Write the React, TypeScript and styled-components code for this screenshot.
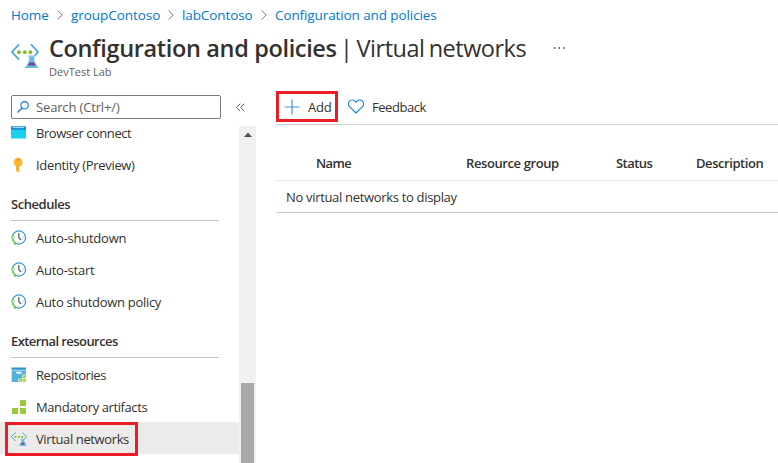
import React from "react";
import styled, { createGlobalStyle } from "styled-components";

const GlobalStyle = createGlobalStyle`
  * { box-sizing: border-box; }
  body {
    margin: 0;
    background: #fff;
    color: #323130;
    font-family: "Open Sans", "Noto Sans", sans-serif;
    font-size: 13px;
    overflow: hidden;
  }
`;

const Page = styled.div`
  width: 778px;
  height: 463px;
  overflow: hidden;
  display: flex;
  flex-direction: column;
`;

const Label = styled.span<{ $ls?: number }>`
  letter-spacing: ${(p) => p.$ls ?? -0.25}px;
  white-space: nowrap;
`;

const Breadcrumb = styled.nav`
  display: flex;
  align-items: center;
  height: 30px;
  flex: none;
  padding-left: 11px;
  color: #0078d4;
  font-size: 13.5px;
  line-height: 18px;
`;

const Crumb = styled(Label)<{ $w: number }>`
  width: ${(p) => p.$w}px;
`;

const Separator = styled.svg`
  width: 6px;
  height: 10px;
  margin: 0 8px;
  flex: none;
`;

const Header = styled.header`
  display: flex;
  height: 65px;
  flex: none;
  padding-left: 11px;
`;

const HeaderIcon = styled.div`
  width: 38px;
  padding-top: 12px;
`;

const Title = styled.h1`
  margin: 0;
  font-size: 23.5px;
  line-height: 36px;
  font-weight: 600;
  display: flex;
  white-space: pre;
`;

const TitleMain = styled.span`
  width: 291px;
  letter-spacing: -0.35px;
`;

const TitleSub = styled.span`
  width: 213px;
  font-weight: 400;
  letter-spacing: -0.5px;
  word-spacing: -1.4px;
`;

const Subtitle = styled.div`
  font-size: 11px;
  line-height: 14px;
  letter-spacing: 0;
  color: #605e5c;
  margin-top: -1px;
`;

const Body = styled.div`
  display: flex;
  flex: 1;
  min-height: 0;
`;

const Sidebar = styled.aside`
  width: 256px;
  flex: none;
  display: flex;
  flex-direction: column;
`;

const SearchRow = styled.div`
  display: flex;
  align-items: center;
  height: 24px;
  flex: none;
  padding-left: 11px;
  position: relative;
  z-index: 1;
`;

const SearchBox = styled.div`
  width: 210px;
  height: 24px;
  border: 1px solid #7a7876;
  border-radius: 2px;
  background: #fff;
  display: flex;
  align-items: center;
  gap: 7px;
  padding-left: 5px;
  color: #605e5c;
`;

const Collapse = styled.svg`
  width: 9px;
  height: 9px;
  margin-left: 15px;
`;

const MenuArea = styled.div`
  display: flex;
  flex: 1;
  min-height: 0;
  margin-top: -3px;
`;

const Menu = styled.div`
  width: 239px;
  flex: none;
`;

const MenuItem = styled.div<{ $selected?: boolean }>`
  position: relative;
  height: 32px;
  padding-left: 11px;
  display: flex;
  align-items: center;
  gap: 9px;
  background: ${(p) => (p.$selected ? "#edebe9" : "transparent")};
  line-height: 18px;

  ${Label} { padding-top: 2px; }
`;

const ItemIcon = styled.span`
  width: 16px;
  height: 16px;
  margin-top: 2px;
  flex: none;
  display: block;
  svg { display: block; }
`;

const GroupTitle = styled.div`
  height: 41px;
  width: 208px;
  margin-left: 11px;
  padding-top: 15px;
  border-bottom: 1px solid #c8c6c4;
  font-weight: 600;
  line-height: 18px;
`;

const Highlight = styled.div`
  position: absolute;
  left: 5px;
  top: 0;
  width: 133px;
  height: 34px;
  border: 3px solid #ed1c24;
`;

const ScrollTrack = styled.div`
  width: 17px;
  margin-top: 10px;
  background: #f1f1f1;
  display: flex;
  flex-direction: column;
  align-items: center;
`;

const ScrollArrow = styled.svg`
  width: 8px;
  height: 5px;
  margin-top: 6px;
  flex: none;
`;

const ScrollThumb = styled.div`
  width: 13px;
  flex: 1;
  margin-top: 246px;
  background: #a8a8a8;
`;

const Main = styled.main`
  flex: 1;
  margin-left: 20px;
  margin-top: -4px;
`;

const Toolbar = styled.div`
  height: 34px;
  display: flex;
  align-items: flex-start;
  border-bottom: 1px solid #d2d0ce;
`;

const AddButton = styled.div`
  width: 62px;
  height: 31px;
  border: 3px solid #ed1c24;
  display: flex;
  align-items: center;
  padding-left: 5px;
  gap: 8px;
`;

const FeedbackButton = styled.div`
  height: 31px;
  display: flex;
  align-items: center;
  padding-left: 10px;
  gap: 8px;
`;

const TableHead = styled.div`
  display: grid;
  grid-template-columns: 150px 150px 80px 1fr;
  padding: 21px 0 0 40px;
  height: 56px;
  border-bottom: 1px solid #e8e6e4;
  line-height: 34px;
  font-weight: 600;
`;

const TableRow = styled.div`
  height: 32px;
  padding-left: 10px;
  display: flex;
  align-items: center;
  border-bottom: 1px solid #c8c6c4;
`;

const More = styled.svg`
  width: 13px;
  height: 3px;
  margin-top: 17px;
`;

const Chevron = () => (
  <Separator viewBox="0 0 6 10">
    <path d="M.7.5 5.2 5 .7 9.5" fill="none" stroke="#767472" />
  </Separator>
);

const LabIcon = ({ size }: { size: number }) => (
  <svg width={size} height={size} viewBox="0 0 28 28">
    <path d="M8 2.4.9 10l7.1 7.6M20 2.4l7.1 7.6-4.6 5" fill="none" stroke="#45a6d3" strokeWidth="1.7" />
    <circle cx="8" cy="10.2" r="1.9" fill="#86b82a" />
    <circle cx="13.8" cy="10.2" r="1.9" fill="#86b82a" />
    <circle cx="19.4" cy="10.2" r="1.9" fill="#86b82a" />
    <path d="M18.2 14h5v4.5l3.8 7.5H14.4l3.8-7.5z" fill="#6cbbe0" />
    <path d="M17.2 13.4h7V15h-7z" fill="#8dcce8" />
    <path d="m18.6 20.6-1.6 3h7.6l-1.6-3z" fill="#7b3f91" />
    <path d="M14.2 24.4h13V26h-13z" fill="#6cbbe0" />
  </svg>
);

const BrowserIcon = () => (
  <svg width="16" height="16" viewBox="0 0 16 16">
    <path d="M0 1.5h15V13a.6.6 0 0 1-.6.6H.6A.6.6 0 0 1 0 13z" fill="#1bd0ee" />
    <path d="M0 4.5V1.5h15v3z" fill="#0877cf" />
    <path d="M1.5 2.2h12v1h-12z" fill="#c9e7fa" />
  </svg>
);

const KeyIcon = () => (
  <svg width="16" height="16" viewBox="0 0 16 16">
    <path d="M7.2.7a4.6 4.6 0 0 0-2 8.7v4.4L7 15.5l1.8-1.8-1-1.2 1-1.1-.9-1 1-1A4.6 4.6 0 0 0 7.2.7z" fill="#fdba31" />
    <circle cx="7.1" cy="3" r="1.2" fill="#e58b10" />
    <path d="M6.3 8v5.5" stroke="#e99c1c" strokeWidth=".8" />
  </svg>
);

const ClockIcon = () => (
  <svg width="16" height="16" viewBox="0 0 16 16">
    <circle cx="7.9" cy="7.5" r="6.6" fill="#fff" stroke="#3a96da" strokeWidth="1.2" />
    <path d="M3.2 2.8A6.7 6.7 0 0 0 4 13" fill="none" stroke="#7cc96a" strokeWidth="1.5" />
    <path d="m2 13.3 4-.5-1.4 2.5z" fill="#7cc742" />
    <path d="M7.8 3v4.7l2.4 2.3" fill="none" stroke="#65686d" strokeWidth="1.3" />
    <path d="M3 7.5h1m7.5 0h1M7.8 11.5v1" stroke="#a0a6ab" />
  </svg>
);

const RepoIcon = () => (
  <svg width="16" height="16" viewBox="0 0 16 16">
    <path d="M.7 1h14.3v14H.7z" fill="#4fb2da" />
    <path d="M.5.5H15v2H.5z" fill="#2a93bf" />
    <path d="M.8 2.7H15v1H.8z" fill="#a8d9eb" />
    <path d="M5.3 4.7h5.2v2H5.3z" fill="#fff" />
    <path d="M11.2 7.5H15.4V15.4H7.3v-3.8h3.9z" fill="#e4efce" />
    <path d="M12 8.3h2.7v2.7H12zM12 12h2.7v2.7H12zM8.2 12h2.7v2.7H8.2z" fill="#a3cd4c" />
  </svg>
);

const ArtifactIcon = () => (
  <svg width="16" height="16" viewBox="0 0 16 16">
    <path d="M9 1h6v6H9zM1 9h6v6H1zM9 9h6v6H9z" fill="#99ca3c" />
  </svg>
);

interface Entry {
  text: string;
  icon: React.ReactNode;
  ls?: number;
  selected?: boolean;
}

const general: Entry[] = [
  { text: "Browser connect", icon: <BrowserIcon />, ls: -0.45 },
  { text: "Identity (Preview)", icon: <KeyIcon />, ls: -0.33 },
];
const schedules: Entry[] = [
  { text: "Auto-shutdown", icon: <ClockIcon /> },
  { text: "Auto-start", icon: <ClockIcon /> },
  { text: "Auto shutdown policy", icon: <ClockIcon />, ls: -0.3 },
];
const external: Entry[] = [
  { text: "Repositories", icon: <RepoIcon />, ls: -0.43 },
  { text: "Mandatory artifacts", icon: <ArtifactIcon />, ls: -0.4 },
  { text: "Virtual networks", icon: <LabIcon size={16} />, ls: -0.38, selected: true },
];

const Items = ({ entries }: { entries: Entry[] }) => (
  <>
    {entries.map((e) => (
      <MenuItem key={e.text} $selected={e.selected}>
        <ItemIcon>{e.icon}</ItemIcon>
        <Label $ls={e.ls}>{e.text}</Label>
        {e.selected && <Highlight />}
      </MenuItem>
    ))}
  </>
);

export default function App() {
  return (
    <Page>
      <GlobalStyle />
      <Breadcrumb>
        <Crumb $w={38} $ls={-0.1}>Home</Crumb>
        <Chevron />
        <Crumb $w={89} $ls={-0.05}>groupContoso</Crumb>
        <Chevron />
        <Crumb $w={71} $ls={-0.1}>labContoso</Crumb>
        <Chevron />
        <Crumb $w={163} $ls={-0.1}>Configuration and policies</Crumb>
      </Breadcrumb>
      <Header>
        <HeaderIcon><LabIcon size={28} /></HeaderIcon>
        <div>
          <Title>
            <TitleMain>Configuration and policies</TitleMain>
            <TitleSub>| Virtual networks</TitleSub>
            <More viewBox="0 0 13 3">
              <path d="M1 1h1.5M5.5 1H7M10 1h1.5" stroke="#484644" strokeWidth="1.4" />
            </More>
          </Title>
          <Subtitle>DevTest Lab</Subtitle>
        </div>
      </Header>
      <Body>
        <Sidebar>
          <SearchRow>
            <SearchBox>
              <svg width="12" height="12" viewBox="0 0 12 12">
                <path d="M.5 11.5 5 7" stroke="#0078d4" strokeWidth="1.1" />
                <circle cx="7.6" cy="4.3" r="3.7" fill="none" stroke="#0078d4" strokeWidth="1.1" />
              </svg>
              <Label $ls={-0.15}>Search (Ctrl+/)</Label>
            </SearchBox>
            <Collapse viewBox="0 0 9 9">
              <path d="M4.2.7.8 4.5l3.4 3.8M8.2.7 4.8 4.5l3.4 3.8" fill="none" stroke="#605e5c" />
            </Collapse>
          </SearchRow>
          <MenuArea>
            <Menu>
              <Items entries={general} />
              <GroupTitle><Label $ls={-0.45}>Schedules</Label></GroupTitle>
              <Items entries={schedules} />
              <GroupTitle><Label $ls={-0.57}>External resources</Label></GroupTitle>
              <Items entries={external} />
            </Menu>
            <ScrollTrack>
              <ScrollArrow viewBox="0 0 8 5"><path d="M0 5 4 .5 8 5z" fill="#505050" /></ScrollArrow>
              <ScrollThumb />
            </ScrollTrack>
          </MenuArea>
        </Sidebar>
        <Main>
          <Toolbar>
            <AddButton>
              <svg width="16" height="16" viewBox="0 0 16 16">
                <path d="M8 .5v15M.5 8h15" stroke="#3999dc" strokeWidth="1.2" />
              </svg>
              <Label>Add</Label>
            </AddButton>
            <FeedbackButton>
              <svg width="16" height="16" viewBox="0 0 16 16">
                <path d="M8 14 1.6 7.6A3.8 3.8 0 0 1 7 2.1l1 1.1 1-1.1a3.8 3.8 0 0 1 5.4 5.5z" fill="none" stroke="#0a84d6" strokeWidth="1.1" />
              </svg>
              <Label $ls={-0.45}>Feedback</Label>
            </FeedbackButton>
          </Toolbar>
          <TableHead>
            <Label $ls={-0.6}>Name</Label>
            <Label $ls={-0.4}>Resource group</Label>
            <Label $ls={-0.55}>Status</Label>
            <Label $ls={-0.43}>Description</Label>
          </TableHead>
          <TableRow><Label $ls={-0.32}>No virtual networks to display</Label></TableRow>
        </Main>
      </Body>
    </Page>
  );
}
